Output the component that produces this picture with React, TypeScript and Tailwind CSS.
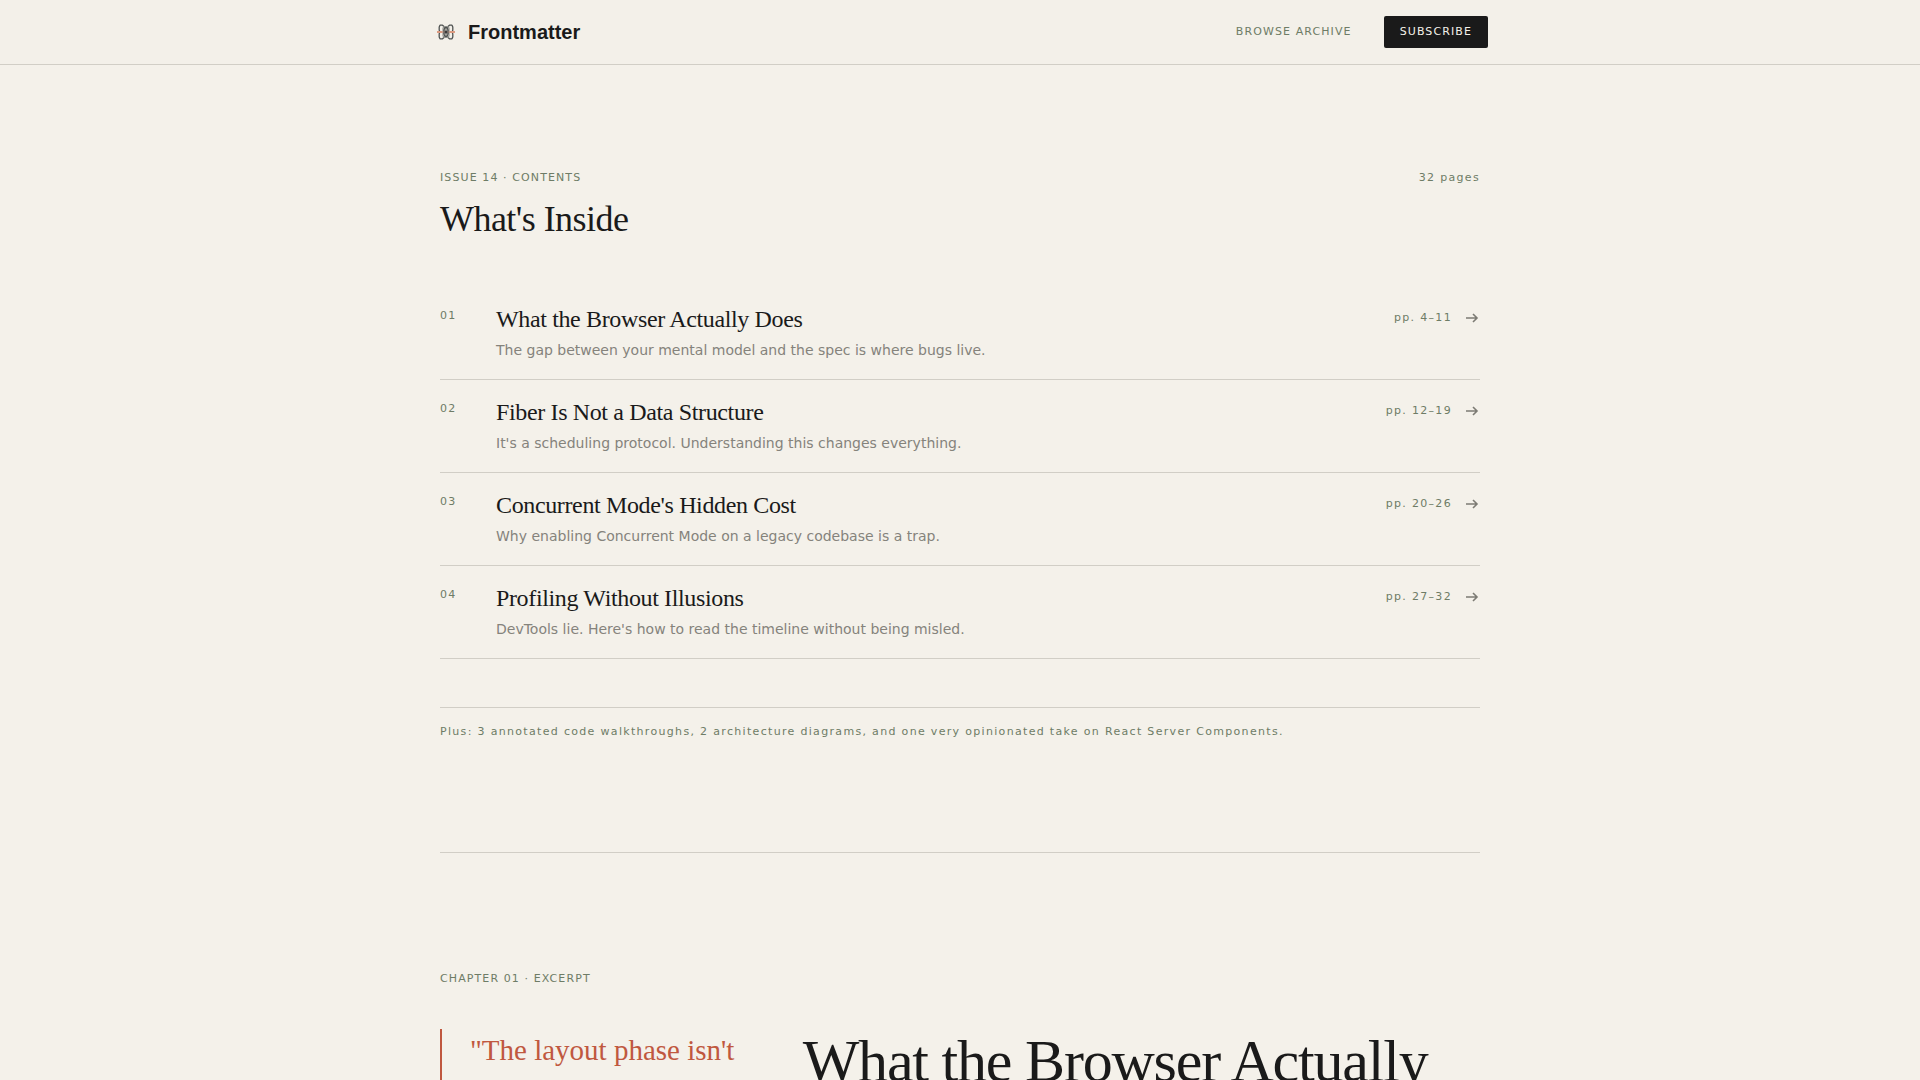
import React from "react";

interface Article {
    id: string;
    title: string;
    summary: string;
    pages: string;
}

const articles: Article[] = [
    {
        id: "01",
        title: "What the Browser Actually Does",
        summary: "The gap between your mental model and the spec is where bugs live.",
        pages: "pp. 4–11",
    },
    {
        id: "02",
        title: "Fiber Is Not a Data Structure",
        summary: "It's a scheduling protocol. Understanding this changes everything.",
        pages: "pp. 12–19",
    },
    {
        id: "03",
        title: "Concurrent Mode's Hidden Cost",
        summary: "Why enabling Concurrent Mode on a legacy codebase is a trap.",
        pages: "pp. 20–26",
    },
    {
        id: "04",
        title: "Profiling Without Illusions",
        summary: "DevTools lie. Here's how to read the timeline without being misled.",
        pages: "pp. 27–32",
    },
];

const Logo: React.FC = () => (
    <svg width="28" height="28" viewBox="0 0 28 28" fill="none" aria-hidden="true">
        <g stroke="#4f5251" strokeWidth="1.3" strokeLinejoin="round">
            <path d="M12 8.600 10.500 7.200H8L7.200 9v3l.6 2-.6 2v3l.8 1.800h2.500L12 19.400" />
            <path d="M16 8.600 17.500 7.200H20l.8 1.800v3l-.6 2 .6 2v3l-.8 1.800h-2.500L16 19.400" />
            <path d="M11 9h6M11 19h6" stroke="#7b7c78" />
            <path d="M11 9.500v9M17 9.500v9" stroke="#a09f99" />
            <ellipse cx="14" cy="14" rx="2.200" ry="4.500" fill="#a3a29c" />
        </g>
        <path d="M5 14h5.500M17.500 14H23" stroke="#dc9a80" strokeWidth="2" />
        <path d="M10.500 14h7" stroke="#a58474" strokeWidth="1" />
        <circle cx="14" cy="14" r="1.500" fill="#3b3b3b" />
    </svg>
);

const Arrow: React.FC = () => (
    <svg width="16" height="16" viewBox="0 0 16 16" fill="none" stroke="#7c7b74" strokeWidth="1.6" aria-hidden="true">
        <path d="M2 8h11M9 4l4 4-4 4" />
    </svg>
);

const Header: React.FC = () => (
    <header className="border-b border-[#d1cec6] bg-[#f3f0e9]">
        <div className="mx-auto flex h-16 max-w-[1120px] items-center justify-between px-8">
            <a href="#top" className="flex items-center gap-2 font-['Liberation_Sans',sans-serif] text-xl font-bold">
                <Logo />
                Frontmatter
            </a>
            <nav className="flex items-center gap-8 text-[11px] tracking-widest">
                <a href="#archive" className="text-[#6e7c66]">
                    BROWSE ARCHIVE
                </a>
                <button className="h-8 rounded-xs bg-[#1a1a1a] px-4 text-[#f4f1ea]">SUBSCRIBE</button>
            </nav>
        </div>
    </header>
);

const App: React.FC = () => {
    return (
        <div
            id="top"
            className="min-h-screen bg-[#f4f1ea] font-['DejaVu_Sans',sans-serif] text-[#1a1a1a]"
        >
            <Header />
            <main className="mx-auto max-w-[1120px] px-10">
                <section id="archive" className="border-b border-[#d1cec6] pt-[105px] pb-28">
                    <div className="flex items-start justify-between text-[11px] leading-4 text-[#6e7c66]">
                        <p className="tracking-widest">ISSUE 14 · CONTENTS</p>
                        <p className="tracking-[0.12em]">32 pages</p>
                    </div>
                    <h1 className="mt-[13px] mb-12 font-['Liberation_Serif',serif] text-4xl leading-10 tracking-[-0.015em]">
                        What's Inside
                    </h1>
                    <ul>
                        {articles.map((article) => (
                            <li key={article.id} className="border-b border-[#d1cec6]">
                                <a href={"#chapter-" + article.id} className="flex items-start py-[18px]">
                                    <span className="w-14 pt-[3px] text-[11px] leading-4 tracking-[0.12em] text-[#6e7c66]">
                                        {article.id}
                                    </span>
                                    <div className="flex-1">
                                        <h2 className="font-['Liberation_Serif',serif] text-2xl leading-7 tracking-[-0.015em]">
                                            {article.title}
                                        </h2>
                                        <p className="mt-1.5 text-sm leading-[22px] text-[#85837c]">
                                            {article.summary}
                                        </p>
                                    </div>
                                    <div className="flex items-center gap-3 pt-[5px] text-[11px] leading-4 tracking-[0.12em] text-[#6e7c66]">
                                        {article.pages}
                                        <Arrow />
                                    </div>
                                </a>
                            </li>
                        ))}
                    </ul>
                    <p className="mt-12 border-t border-[#d1cec6] pt-4 text-[11px] leading-4 tracking-[0.12em] text-[#6e7c66]">
                        Plus: 3 annotated code walkthroughs, 2 architecture diagrams, and one very opinionated take on
                        React Server Components.
                    </p>
                </section>
                <section id="chapter-01" className="pt-[118px]">
                    <p className="text-[11px] leading-4 tracking-widest text-[#6e7c66]">CHAPTER 01 · EXCERPT</p>
                    <div className="mt-[42px] grid grid-cols-12 gap-12">
                        <blockquote className="col-span-4 border-l-2 border-[#c0583f] pl-7 font-['Liberation_Serif',serif] text-[29px] leading-[42px] text-[#c0583f]">
                            "The layout phase isn't
                        </blockquote>
                        <h2 className="col-span-8 font-['Liberation_Serif',serif] text-6xl leading-16 tracking-[-0.02em]">
                            What the Browser Actually
                        </h2>
                    </div>
                </section>
            </main>
        </div>
    );
};

export default App;
